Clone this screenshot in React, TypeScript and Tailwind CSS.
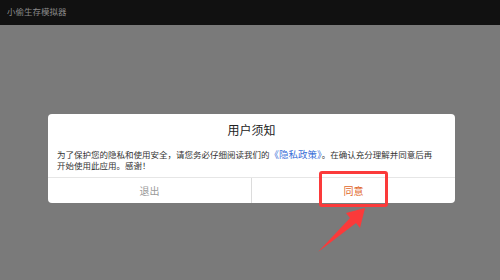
export default function App() {
  return (
    <div
      className="relative w-[500px] h-[280px] flex flex-col overflow-hidden"
      style={{ fontFamily: '"Noto Sans CJK SC", "Noto Sans", sans-serif' }}
    >
      <div className="h-[25px] bg-[#111111] flex items-center pl-[7px]">
        <span className="text-[8.5px] leading-none text-[#8a8a8a] pb-[2px]">小偷生存模拟器</span>
      </div>

      <div className="flex-1 bg-[#7a7a7a] pt-[89px] pl-[48px]">
        <div className="w-[407px] bg-white rounded-[4px] flex flex-col">
          <div className="pt-[9px] text-center text-[12px] leading-[14px] text-[#222222]">用户须知</div>
          <div className="mt-[12px] pl-[9px] pr-[10px] pb-[6px] text-[8.5px] leading-[11px] text-[#333333]">
            为了保护您的隐私和使用安全，请您务必仔细阅读我们的
            <span className="text-[9.5px] text-[#3a6fd8]">《隐私政策》</span>
            。在确认充分理解并同意后再
            <br />
            开始使用此应用。感谢！
          </div>
          <div className="h-[26px] border-t border-[#e6e6e6] flex">
            <div className="flex-1 flex items-center justify-center text-[10px] text-[#9a9a9a] border-r border-[#dcdcdc]">
              退出
            </div>
            <div className="flex-1 flex items-center justify-center text-[10px] text-[#e0662a]">同意</div>
          </div>
        </div>
      </div>

      <div className="absolute left-[319px] top-[171px] w-[69px] h-[36px] border-[3px] border-[#fb3a3a] rounded-[3px]" />

      <svg className="absolute left-0 top-0" width="500" height="280" viewBox="0 0 500 280">
        <polygon
          points="365,208 360,228 356,223 318,252 350,218 346,213"
          fill="#fb3a3a"
        />
      </svg>
    </div>
  )
}
